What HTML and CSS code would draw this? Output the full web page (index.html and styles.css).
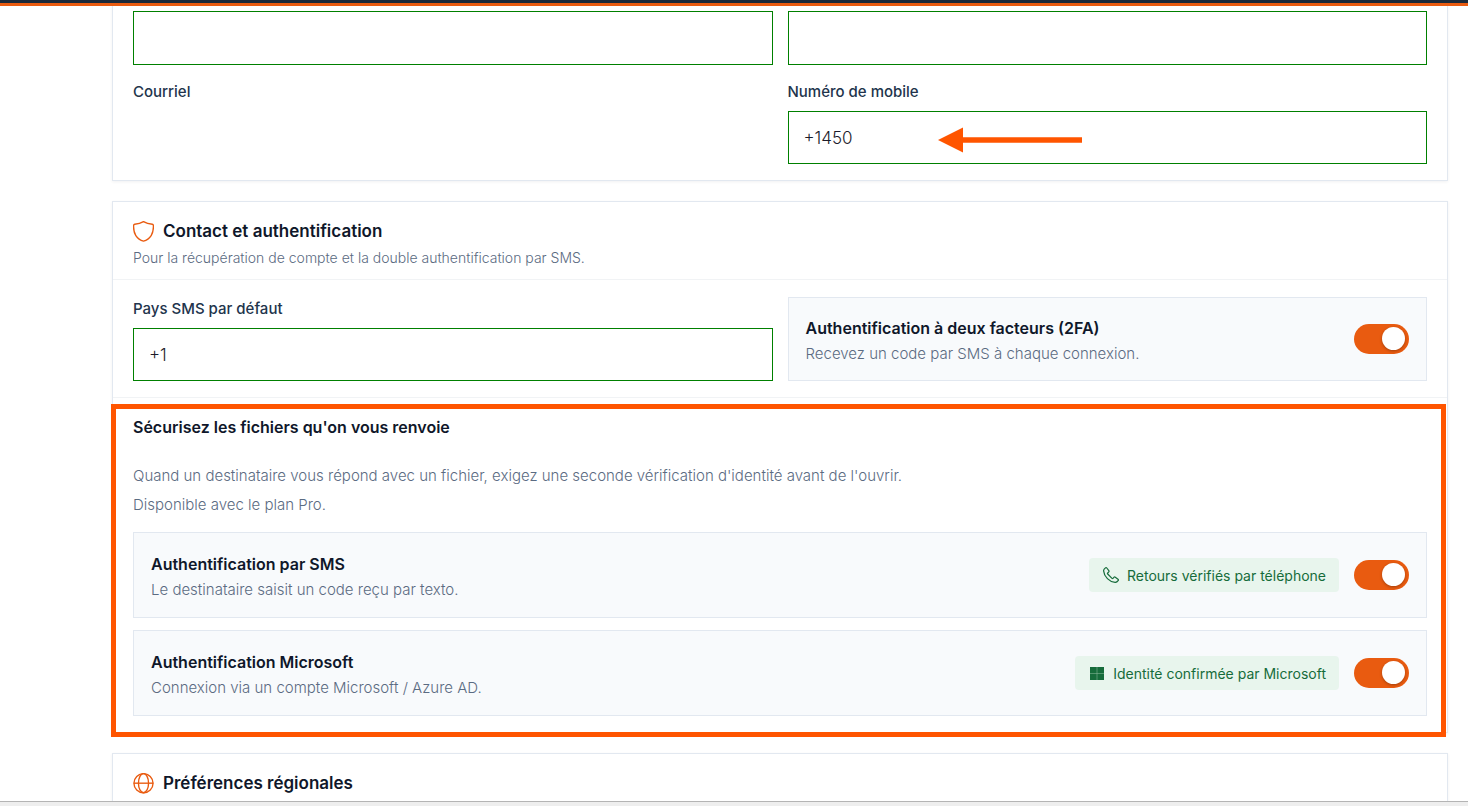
FILE: index.html
```html
<!DOCTYPE html>
<html lang="fr">
<head>
    <meta charset="UTF-8">
    <meta name="viewport" content="width=device-width, initial-scale=1.0">
    <title>Mon profil</title>
    <link rel="stylesheet" href="styles.css">
</head>
<body>
    <!-- Top bar -->
    <header class="topbar"></header>

    <!-- Main Container -->
    <main class="container">

        <!-- Personal information -->
        <section class="card card-profile">
            <div class="form-grid">
                <input type="text" class="input input-tall" aria-label="Prénom">
                <input type="text" class="input input-tall" aria-label="Nom">
                <div class="field">
                    <label for="email">Courriel</label>
                    <input type="email" id="email" class="input input-plain">
                </div>
                <div class="field">
                    <label for="mobile">Numéro de mobile</label>
                    <div class="input-wrap">
                        <input type="tel" id="mobile" class="input" value="+1450">
                        <svg class="arrow" width="144" height="26" viewBox="0 0 144 26" aria-hidden="true">
                            <path d="M0 13L25 .5V25.500Z" fill="#ff5500"/>
                            <path d="M24 13H144" stroke="#ff5500" stroke-width="5.500"/>
                        </svg>
                    </div>
                </div>
            </div>
        </section>

        <!-- Contact and authentication -->
        <section class="card">
            <div class="card-header">
                <h2>
                    <svg class="icon" width="21" height="21" viewBox="0 0 20 20" aria-hidden="true">
                        <path d="M10 .6C7.600 2.100 4.600 2.900 1.600 3.100 .9 3.200.6 3.600.6 4.200 .4 7.800.9 11 2.700 13.900 4.300 16.400 6.700 18.300 10 19.100 13.300 18.300 15.700 16.400 17.300 13.900 19.100 11 19.600 7.800 19.400 4.200 19.400 3.600 19.100 3.200 18.400 3.100 15.400 2.900 12.400 2.100 10 .6Z"/>
                    </svg>
                    Contact et authentification
                </h2>
                <p>Pour la récupération de compte et la double authentification par SMS.</p>
            </div>

            <div class="card-body form-grid">
                <div class="field">
                    <label for="country">Pays SMS par défaut</label>
                    <input type="text" id="country" class="input" value="+1">
                </div>
                <div class="option">
                    <div class="option-text">
                        <label for="two-factor">Authentification à deux facteurs (2FA)</label>
                        <p>Recevez un code par SMS à chaque connexion.</p>
                    </div>
                    <input type="checkbox" id="two-factor" class="switch" role="switch" checked>
                </div>
            </div>

            <!-- Secured replies -->
            <div class="secure highlight">
                <h3>Sécurisez les fichiers qu'on vous renvoie</h3>
                <p class="intro">
                    Quand un destinataire vous répond avec un fichier, exigez une seconde vérification d'identité avant de l'ouvrir.<br>
                    Disponible avec le plan Pro.
                </p>
                <div class="option-list">
                    <div class="option">
                        <div class="option-text">
                            <label for="sms-auth">Authentification par SMS</label>
                            <p>Le destinataire saisit un code reçu par texto.</p>
                        </div>
                        <span class="badge">
                            <svg width="16" height="16" viewBox="0 0 16 16" fill="none" stroke="currentColor" stroke-width="1.200" aria-hidden="true">
                                <path d="M2.300 .9C1.200 1.700.5 2.500.6 3.900 1 9.500 6.500 15 12.100 15.400 13.500 15.500 14.300 14.800 15.100 13.700 15.500 13.200 15.500 12.600 15 12.200L12.300 10.200C11.900 9.900 11.400 9.900 11.100 10.200L10 11.300C9.700 11.600 9.300 11.600 9 11.300L4.700 7C4.400 6.700 4.400 6.300 4.700 6L5.800 4.900C6.100 4.600 6.100 4.100 5.800 3.700L3.800 1C3.400.5 2.800.5 2.300.9Z"/>
                            </svg>
                            Retours vérifiés par téléphone
                        </span>
                        <input type="checkbox" id="sms-auth" class="switch" role="switch" checked>
                    </div>
                    <div class="option">
                        <div class="option-text">
                            <label for="ms-auth">Authentification Microsoft</label>
                            <p>Connexion via un compte Microsoft / Azure AD.</p>
                        </div>
                        <span class="badge">
                            <svg width="16" height="16" viewBox="0 0 16 16" aria-hidden="true">
                                <rect x="1" y="2" width="14" height="13" fill="currentColor"/>
                                <path d="M8 2V15M1 8.500H15" stroke="#7fb394" stroke-width=".6"/>
                            </svg>
                            Identité confirmée par Microsoft
                        </span>
                        <input type="checkbox" id="ms-auth" class="switch" role="switch" checked>
                    </div>
                </div>
            </div>
        </section>

        <!-- Regional preferences -->
        <section class="card">
            <div class="card-header">
                <h2>
                    <svg class="icon" width="21" height="21" viewBox="0 0 20 20" aria-hidden="true">
                        <circle cx="10" cy="9.700" r="9.100"/>
                        <ellipse cx="10" cy="9.700" rx="4.800" ry="9.100"/>
                        <path d="M.7 9.700H19.300"/>
                    </svg>
                    Préférences régionales
                </h2>
            </div>
        </section>
    </main>

    <!-- Bottom bar -->
    <footer class="bottombar"></footer>
</body>
</html>
```

FILE: styles.css
```css
/* General Styles */
* {
    box-sizing: border-box;
}

body {
    margin: 0;
    height: 100vh;
    display: flex;
    flex-direction: column;
    overflow: hidden;
    font-family: 'Inter', 'Liberation Sans', sans-serif;
    font-size: 15px;
    background-color: #fff;
    color: #0f172a;
}

h2, h3, p {
    margin: 0;
}

/* Bars */
.topbar {
    flex: none;
    height: 6px;
    background-color: #1b2a3a;
    border-bottom: 3px solid #e95b10;
}

.bottombar {
    flex: none;
    height: 5px;
    background-color: #eee;
    border-top: 1px solid #b4b4b4;
}

/* Main Container */
.container {
    flex: 1;
    min-height: 0;
    overflow: hidden;
    padding: 0 20px 0 112px;
}

/* Cards */
.card {
    margin-bottom: 20px;
    background-color: #fff;
    border: 1px solid #e2e8f0;
    box-shadow: 0 1px 3px rgba(15, 23, 42, 0.06);
}

.card-profile {
    padding: 5px 20px 16px;
    border-top: none;
}

.card-header {
    padding: 16px 20px 8px;
}

.card-header h2 {
    display: flex;
    align-items: center;
    gap: 9px;
    font-size: 17px;
    line-height: 27px;
    font-weight: 600;
}

.card-header p {
    font-size: 14px;
    line-height: 26px;
    font-weight: 300;
    color: #5b6b82;
}

.card-body {
    padding: 17px 20px 16px;
    border-top: 1px solid #f1f3f5;
    border-bottom: 1px solid #f1f3f5;
}

.icon {
    fill: none;
    stroke: #e95b10;
    stroke-width: 1.3;
}

/* Forms */
.form-grid {
    display: grid;
    grid-template-columns: 1fr 1fr;
    gap: 15px;
}

.field label {
    display: block;
    margin-bottom: 7px;
    line-height: 24px;
    font-weight: 500;
    color: #22344c;
}

.input {
    display: block;
    width: 100%;
    height: 53px;
    padding: 0 15px;
    border: 1px solid #008000;
    border-radius: 0;
    background-color: #fff;
    font-family: inherit;
    font-size: 17px;
    font-weight: 300;
    color: #1b1b2b;
}

.input-tall {
    height: 54px;
}

.input-plain {
    border-color: transparent;
}

.input-wrap {
    position: relative;
}

.arrow {
    position: absolute;
    top: 16px;
    left: 150px;
}

/* Options */
.option {
    display: flex;
    align-items: center;
    gap: 15px;
    padding: 0 17px;
    background-color: #f8fafc;
    border: 1px solid #e2e8f0;
}

.option-text {
    flex: 1;
    padding-top: 3px;
}

.option-text label {
    display: block;
    font-size: 16px;
    line-height: 26px;
    font-weight: 600;
}

.option-text p {
    font-size: 15px;
    line-height: 26px;
    font-weight: 300;
    color: #5b6b82;
}

.option-list {
    display: grid;
    gap: 12px;
}

.option-list .option {
    min-height: 86px;
}

.badge {
    display: flex;
    align-items: center;
    gap: 8px;
    height: 34px;
    padding: 0 13px 0 14px;
    border-radius: 4px;
    background-color: #e8f5ed;
    color: #166c3b;
    font-size: 14px;
    font-weight: 400;
}

.switch {
    appearance: none;
    flex: none;
    width: 55px;
    height: 30px;
    margin: 0;
    padding: 3px 4px;
    border-radius: 15px;
    background-color: #94a3b8;
    display: flex;
    cursor: pointer;
}

.switch::before {
    content: "";
    width: 23px;
    height: 23px;
    border-radius: 50%;
    background-color: #fff;
    box-shadow: 0 1px 3px rgba(0, 0, 0, 0.3);
}

.switch:checked {
    background-color: #e95b10;
    justify-content: flex-end;
}

/* Secured replies */
.secure {
    padding: 16px 20px;
}

.secure h3 {
    margin-bottom: 20px;
    font-size: 16px;
    line-height: 27px;
    font-weight: 600;
}

.intro {
    margin-bottom: 13px;
    line-height: 29px;
    font-weight: 300;
    color: #5b6b82;
}

.highlight {
    position: relative;
}

.highlight::after {
    content: "";
    position: absolute;
    inset: 6px 1px -5px -2px;
    border: 5px solid #ff5500;
    pointer-events: none;
}
```
